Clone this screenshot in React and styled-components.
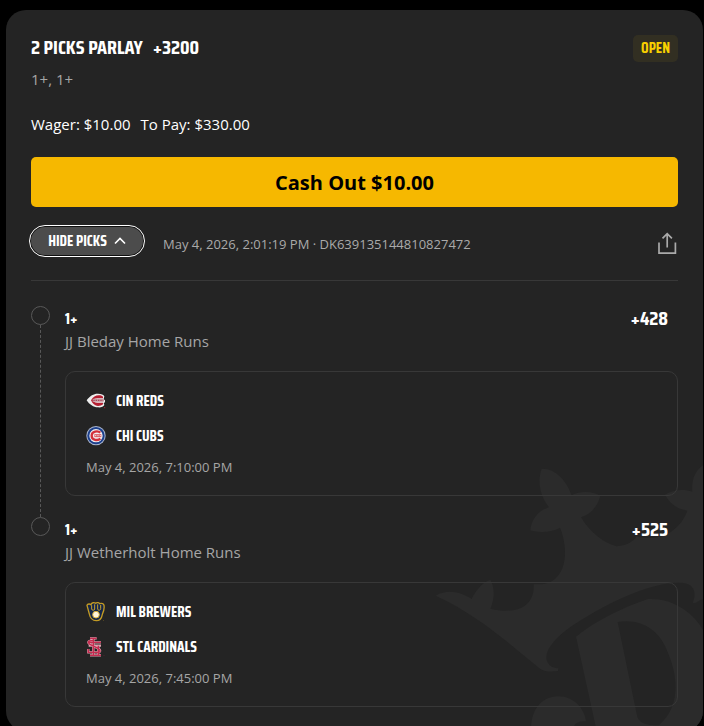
import React, { useState } from "react";
import styled, { createGlobalStyle } from "styled-components";

const condensed = `"Saira Condensed", "Roboto Condensed", "Liberation Sans Narrow", "Liberation Sans", sans-serif`;

const GlobalStyle = createGlobalStyle`
  * { box-sizing: border-box; }
  html { background: #000; scrollbar-width: none; }
  body {
    margin: 0;
    background: #000;
    color: #fff;
    font-family: "Open Sans", "Noto Sans", sans-serif;
    font-size: 15px;
    line-height: 20px;
  }
  h2, h3, p, ol, ul { margin: 0; padding: 0; }
  button { font: inherit; border: 0; cursor: pointer; }
`;

const Page = styled.main`
  padding: 10px 1px 0 6px;
`;

const Card = styled.article`
  position: relative;
  overflow: hidden;
  padding: 24px 25px;
  border-radius: 20px;
  background: #242424;
`;

const Watermark = styled.svg`
  position: absolute;
  right: 0;
  bottom: 0;
  width: 283px;
  height: 282px;
`;

const Content = styled.div`
  position: relative;
`;

const Header = styled.header`
  display: flex;
  align-items: center;
  justify-content: space-between;
`;

const Title = styled.h2`
  display: flex;
  gap: 10px;
  padding-bottom: 2px;
  font-family: ${condensed};
  font-size: 20px;
  font-weight: 700;
  line-height: 26px;
`;

const Status = styled.span`
  padding: 4px 8px;
  border-radius: 5px;
  background: #322f22;
  color: #f8d000;
  font-family: ${condensed};
  font-size: 15px;
  font-weight: 700;
  line-height: 19px;
`;

const Summary = styled.p`
  margin-top: 7px;
  color: #a6a6a6;
`;

const Stakes = styled.p`
  display: flex;
  gap: 10px;
  margin-top: 25px;
`;

const CashOut = styled.button`
  display: block;
  width: 100%;
  height: 50px;
  margin-top: 23px;
  padding: 2px 0 0;
  border-radius: 5px;
  background: #f6b800;
  color: #000;
  && { font-size: 20px; font-weight: 700; }
`;

const Meta = styled.div`
  display: flex;
  align-items: center;
  height: 74px;
  padding-bottom: 6px;
  border-bottom: 1px solid #383838;
`;

const Toggle = styled.button`
  display: flex;
  align-items: center;
  justify-content: center;
  gap: 7px;
  width: 112px;
  height: 28px;
  border-radius: 14px;
  background: #4c4c4c;
  color: #fff;
  outline: 1px solid #fff;
  outline-offset: 1px;
  box-shadow: 0 0 0 1px #101010;
  && {
    font-family: ${condensed};
    font-size: 15px;
    font-weight: 700;
  }
`;

const Receipt = styled.p`
  flex: 1;
  margin-left: 20px;
  padding-top: 6px;
  color: #aaa;
  font-size: 13px;
`;

const Share = styled.button`
  display: flex;
  padding: 4px 1px 0;
  background: none;
  color: #aaa;
`;

const Legs = styled.ol`
  padding-top: 25px;
  list-style: none;
`;

const Leg = styled.li`
  display: grid;
  grid-template-columns: 19px minmax(0, 1fr);
  column-gap: 15px;
`;

const Track = styled.div`
  display: flex;
  flex-direction: column;
  align-items: center;
`;

const Dot = styled.span`
  width: 19px;
  height: 19px;
  border: 1px solid #585858;
  border-radius: 50%;
`;

const Dashes = styled.span`
  flex: 1;
  border-left: 1px dashed #585858;
`;

const LegBody = styled.div`
  padding-bottom: ${({ $last }) => ($last ? "0" : "21px")};
`;

const LegTitle = styled.div`
  display: flex;
  align-items: center;
  justify-content: space-between;
  padding-right: 10px;
  font-family: ${condensed};
  font-weight: 700;
`;

const Line = styled.h3`
  font-size: 16px;
  line-height: 25px;
`;

const Odds = styled.span`
  font-size: 20px;
  line-height: 25px;
`;

const Player = styled.p`
  color: #a6a6a6;
`;

const Game = styled.section`
  margin-top: 20px;
  padding: 16px 20px 19px;
  border: 1px solid #383838;
  border-radius: 10px;
`;

const Team = styled.div`
  display: flex;
  align-items: center;
  gap: 10px;
  height: 25px;
  margin-bottom: 10px;
  font-family: ${condensed};
  font-weight: 700;
`;

const Logo = styled.svg`
  width: 20px;
  height: 20px;
  flex: none;
`;

const Start = styled.p`
  color: #a6a6a6;
  font-size: 13px;
  line-height: 18px;
`;

const logos = {
  reds: (
    <Logo viewBox="0 0 60 60" aria-hidden="true">
      <path d="M2 28C12 13 26 7 36 8c10 0 17 3 19 8l-2 9 4 3v6l-4 2 2 6C52 48 44 50 35 49 23 49 10 41 2 28Z" fill="#eee" />
      <path d="M15 28C21 18 29 13 38 13c7 0 12 2 13 5v4H34c-8 0-12 2-12 6s4 7 12 7h17v5c-4 4-9 5-15 5C27 45 19 38 15 28Z" fill="#b51f32" />
      <path d="M20 28h33" stroke="#c8a0a6" strokeWidth="9" />
      <path d="M22 28h30" stroke="#a8485a" strokeWidth="4" strokeDasharray="4 3" />
      <circle cx="56" cy="50" r="2" fill="#a51e30" />
    </Logo>
  ),
  cubs: (
    <Logo viewBox="0 0 60 60" aria-hidden="true">
      <circle cx="30" cy="29" r="29" fill="#a9b4cc" />
      <circle cx="30" cy="29" r="26" fill="#1c3f8c" />
      <circle cx="30" cy="29" r="20" fill="#f1f1f4" />
      <path d="M43 20C36 13 17 15 17 29s19 16 26 9" fill="none" stroke="#d3303b" strokeWidth="7" />
      <path d="M25 29h21" stroke="#dc5a62" strokeWidth="9" />
      <path d="M27 29h18" stroke="#f3d4d6" strokeWidth="3" strokeDasharray="4 3" />
    </Logo>
  ),
  brewers: (
    <Logo viewBox="0 0 60 60" aria-hidden="true">
      <path d="M3 10c2-5 9-5 12-2 2-7 10-7 14-4 4-3 10-3 12 1 6-2 13 0 13 6 2 10-1 17-5 26-2 12-8 19-18 19-13 0-19-9-21-20Z" fill="#14264b" stroke="#c29a24" strokeWidth="4" />
      <path d="M17 10v11c0 5 9 5 9 0V7M35 7v14c0 5 9 5 9-1V9" fill="none" stroke="#c6a12d" strokeWidth="3" />
      <circle cx="30" cy="38" r="10" fill="#fff4dc" stroke="#d5ad34" strokeWidth="3" />
      <circle cx="53" cy="55" r="1" fill="#b8952b" />
    </Logo>
  ),
  cardinals: (
    <Logo viewBox="0 0 60 60" aria-hidden="true">
      <g fill="none">
        <path d="M22 2v52M12 4h20M8 16h37M8 26h37M12 55h33M37 26v29M20 11C6 9 4 17 12 22l24 12c10 6 7 13-2 12H7V36" stroke="#dfa0ae" strokeWidth="7" />
        <path d="M22 2v52M12 4h20M8 16h37M12 55h33M37 26v29M20 11C6 9 4 17 12 22l24 12c10 6 7 13-2 12H7V36" stroke="#c62c50" strokeWidth="4" />
      </g>
      <circle cx="54" cy="55" r="1" fill="#bd294b" />
    </Logo>
  ),
};

const legs = [
  {
    line: "1+",
    player: "JJ Bleday Home Runs",
    odds: "+428",
    teams: [["CIN REDS", "reds"], ["CHI CUBS", "cubs"]],
    start: "May 4, 2026, 7:10:00 PM",
  },
  {
    line: "1+",
    player: "JJ Wetherholt Home Runs",
    odds: "+525",
    teams: [["MIL BREWERS", "brewers"], ["STL CARDINALS", "cardinals"]],
    start: "May 4, 2026, 7:45:00 PM",
  },
];

function Crown() {
  return (
    <Watermark viewBox="0 0 849 846" fill="#2b2b2b" aria-hidden="true">
      <path d="M47 440C82 420 121 428 155 450C166 425 188 399 211 392C225 416 224 450 211 479C280 496 345 480 341 405C406 414 435 367 435 311C435 284 429 257 420 236C394 250 360 253 331 244C334 211 354 185 387 175C360 141 351 95 365 59C409 58 440 97 455 139C482 124 519 127 541 140C532 174 511 197 483 205C510 251 552 283 590 292C620 290 640 278 650 262C710 278 776 255 802 185C773 180 750 165 735 137C759 121 792 119 817 128C814 93 825 65 849 49V452C839 449 832 466 818 461C830 435 824 404 789 402C694 395 550 468 450 535C408 565 370 606 381 636C389 653 400 657 415 658L414 666C393 669 373 668 360 659C259 577 176 500 47 440Z" />
      <path fillRule="evenodd" d="M468 563C530 513 613 473 684 450C762 445 825 497 849 543V846H530ZM593 519L652 804C660 827 690 829 717 829C791 765 767 665 743 610C721 545 665 507 593 519Z" />
      <path d="M334 846C330 785 364 742 415 742C462 742 495 781 498 817C482 817 472 819 464 828L455 846Z" />
    </Watermark>
  );
}

export default function App() {
  const [open, setOpen] = useState(true);
  return (
    <>
      <GlobalStyle />
      <Page>
        <Card>
          <Crown />
          <Content>
            <Header>
              <Title><span>2 PICKS PARLAY</span><span>+3200</span></Title>
              <Status>OPEN</Status>
            </Header>
            <Summary>1+, 1+</Summary>
            <Stakes><span>Wager: $10.00</span><span>To Pay: $330.00</span></Stakes>
            <CashOut type="button">Cash Out $10.00</CashOut>
            <Meta>
              <Toggle type="button" aria-expanded={open} onClick={() => setOpen(!open)}>
                {open ? "HIDE PICKS" : "SHOW PICKS"}
                <svg width="12" height="8" viewBox="0 0 12 8" fill="none" stroke="currentColor" strokeWidth="1.6" aria-hidden="true">
                  <path d={open ? "M1 6.5l5-5 5 5" : "M1 1.5l5 5 5-5"} />
                </svg>
              </Toggle>
              <Receipt>May 4, 2026, 2:01:19 PM · DK639135144810827472</Receipt>
              <Share type="button" aria-label="Share">
                <svg width="20" height="24" viewBox="0 0 20 24" fill="none" stroke="currentColor" strokeWidth="1.7" aria-hidden="true">
                  <path d="M2 11.5v10.6h16.4V11.5M10.2 16.5V3M5.5 7.3l4.7-4.7 4.7 4.7" />
                </svg>
              </Share>
            </Meta>
            {open && (
              <Legs>
                {legs.map((leg, i) => (
                  <Leg key={leg.player}>
                    <Track>
                      <Dot />
                      {i < legs.length - 1 && <Dashes />}
                    </Track>
                    <LegBody $last={i === legs.length - 1}>
                      <LegTitle><Line>{leg.line}</Line><Odds>{leg.odds}</Odds></LegTitle>
                      <Player>{leg.player}</Player>
                      <Game>
                        {leg.teams.map(([name, logo]) => (
                          <Team key={name}>{logos[logo]}<span>{name}</span></Team>
                        ))}
                        <Start>{leg.start}</Start>
                      </Game>
                    </LegBody>
                  </Leg>
                ))}
              </Legs>
            )}
          </Content>
        </Card>
      </Page>
    </>
  );
}
